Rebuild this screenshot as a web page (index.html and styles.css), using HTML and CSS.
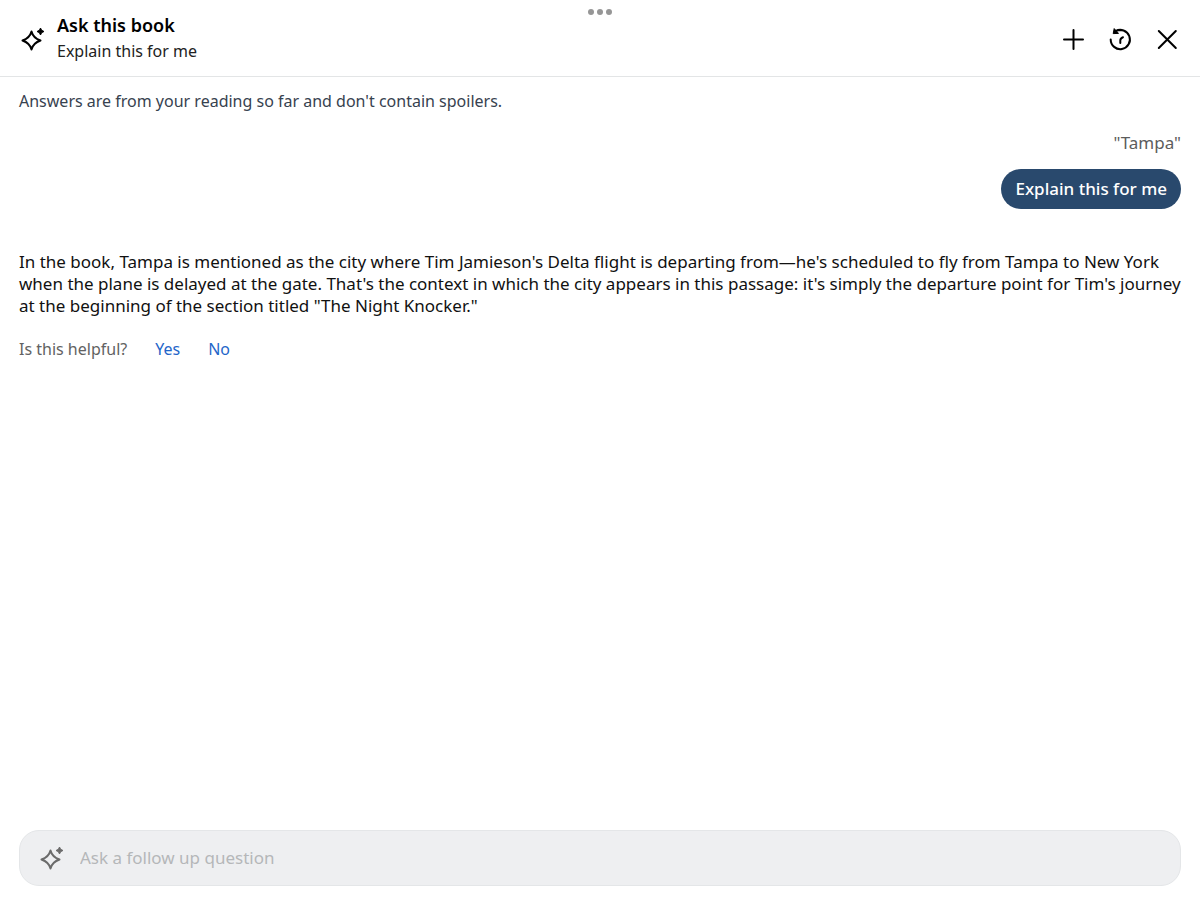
FILE: index.html
```html
<!DOCTYPE html>
<html lang="en">
<head>
<meta charset="utf-8">
<meta name="viewport" content="width=device-width, initial-scale=1">
<title>Ask this book</title>
<link rel="stylesheet" href="styles.css">
</head>
<body>
<div class="app">
  <header class="header">
    <svg class="icon" viewBox="0 0 26 26" aria-hidden="true">
      <path class="line" d="M12.5 5.5C13.6 9.8 16.5 12.8 21.5 14.5C16.5 16.2 13.6 19.2 12.5 23.5C11.4 19.2 8.5 16.2 3.5 14.5C8.5 12.8 11.4 9.8 12.5 5.5Z"/>
      <path class="solid" d="M21.5 2Q22 4.9 25 5.5Q22 6.1 21.5 9Q21 6.1 18 5.5Q21 4.9 21.5 2Z"/>
    </svg>
    <div class="heading">
      <h1 class="title">Ask this book</h1>
      <p class="subtitle">Explain this for me</p>
    </div>
    <div class="actions">
      <button class="action" type="button" aria-label="New conversation">
        <svg class="icon" viewBox="0 0 26 26"><path class="line" d="M13.5 4V23M4 13.5H23"/></svg>
      </button>
      <button class="action" type="button" aria-label="History">
        <svg class="icon" viewBox="0 0 26 26"><path class="line" d="M3.7 13.5A9.6 9.6 0 1 0 8.5 5.2Q10.8 4 13.3 3.9M16 11.2Q13.3 12.2 13.3 14.5V17"/><path class="solid" d="M7.2 2.6L6.2 7.6L11.5 7.4Z"/></svg>
      </button>
      <button class="action" type="button" aria-label="Close">
        <svg class="icon" viewBox="0 0 26 26"><path class="line" d="M4.8 5L21.8 22M21.8 5L4.8 22"/></svg>
      </button>
    </div>
    <button class="handle" type="button" aria-label="Window options"><span class="dot"></span><span class="dot"></span><span class="dot"></span></button>
  </header>
  <main class="chat">
    <p class="notice">Answers are from your reading so far and don't contain spoilers.</p>
    <div class="request">
      <p class="quote">"Tampa"</p>
      <p class="bubble">Explain this for me</p>
    </div>
    <p class="answer">In the book, Tampa is mentioned as the city where Tim Jamieson's Delta flight is departing from—he's scheduled to fly from Tampa to New York when the plane is delayed at the gate. That's the context in which the city appears in this passage: it's simply the departure point for Tim's journey at the beginning of the section titled "The Night Knocker."</p>
    <div class="feedback">
      <span>Is this helpful?</span>
      <button class="vote" type="button">Yes</button>
      <button class="vote" type="button">No</button>
    </div>
  </main>
  <form class="composer">
    <label class="field">
      <svg class="icon" viewBox="0 0 26 26" aria-hidden="true">
        <path class="line" d="M12.5 5.5C13.6 9.8 16.5 12.8 21.5 14.5C16.5 16.2 13.6 19.2 12.5 23.5C11.4 19.2 8.5 16.2 3.5 14.5C8.5 12.8 11.4 9.8 12.5 5.5Z"/>
        <path class="solid" d="M21.5 2Q22 4.9 25 5.5Q22 6.1 21.5 9Q21 6.1 18 5.5Q21 4.9 21.5 2Z"/>
      </svg>
      <input class="input" type="text" aria-label="Ask a follow up question" placeholder="Ask a follow up question">
    </label>
  </form>
</div>
</body>
</html>
```
FILE: styles.css
```css
* { box-sizing: border-box; }
body { margin: 0; background: #fff; color: #111; font: 17px/22px "Noto Sans", sans-serif; }
h1, p { margin: 0; }
button { padding: 0; border: 0; background: none; color: inherit; font: inherit; cursor: pointer; }
.app { display: flex; flex-direction: column; min-height: 100vh; }
.header { position: relative; display: flex; align-items: center; gap: 12px; padding: 13px 20px 12px 19px; border-bottom: 1px solid #e3e5e6; color: #000; }
.icon { display: block; flex: none; width: 26px; height: 26px; }
.line { fill: none; stroke: currentColor; stroke-width: 2; stroke-linecap: round; stroke-linejoin: round; }
.solid { fill: currentColor; stroke: currentColor; stroke-width: 1; stroke-linejoin: round; }
.heading { flex: 1; }
.title { font-size: 18px; font-weight: 600; line-height: 25px; }
.subtitle { font-size: 16px; line-height: 26px; color: #222; }
.actions { display: flex; gap: 21px; }
.handle { position: absolute; top: 8px; left: 50%; display: flex; gap: 3px; padding: 1px; transform: translateX(-50%); }
.dot { width: 6px; height: 6px; border-radius: 50%; background: #969696; }
.chat { flex: 1; padding: 13px 19px; }
.notice { font-size: 16px; color: #37424f; }
.request { display: flex; flex-direction: column; align-items: flex-end; gap: 15px; margin-top: 20px; }
.quote { color: #5c5c5c; }
.bubble { padding: 9px 14px; border-radius: 20px; background: #29496d; color: #fff; font-weight: 500; }
.answer { margin-top: 42px; }
.feedback { display: flex; gap: 28px; margin-top: 21px; font-size: 16px; color: #626262; }
.vote { color: #1f66c9; }
.composer { padding: 0 19px 14px; }
.field { display: flex; align-items: center; gap: 16px; height: 56px; padding: 0 18px; border: 1px solid #e4e6e8; border-radius: 20px; background: #eeeff1; color: #6b6b6b; }
.input { flex: 1; min-width: 0; padding: 0; border: 0; outline: 0; background: none; color: #111; font: inherit; }
.input::placeholder { color: #b5b7b9; opacity: 1; }
```
